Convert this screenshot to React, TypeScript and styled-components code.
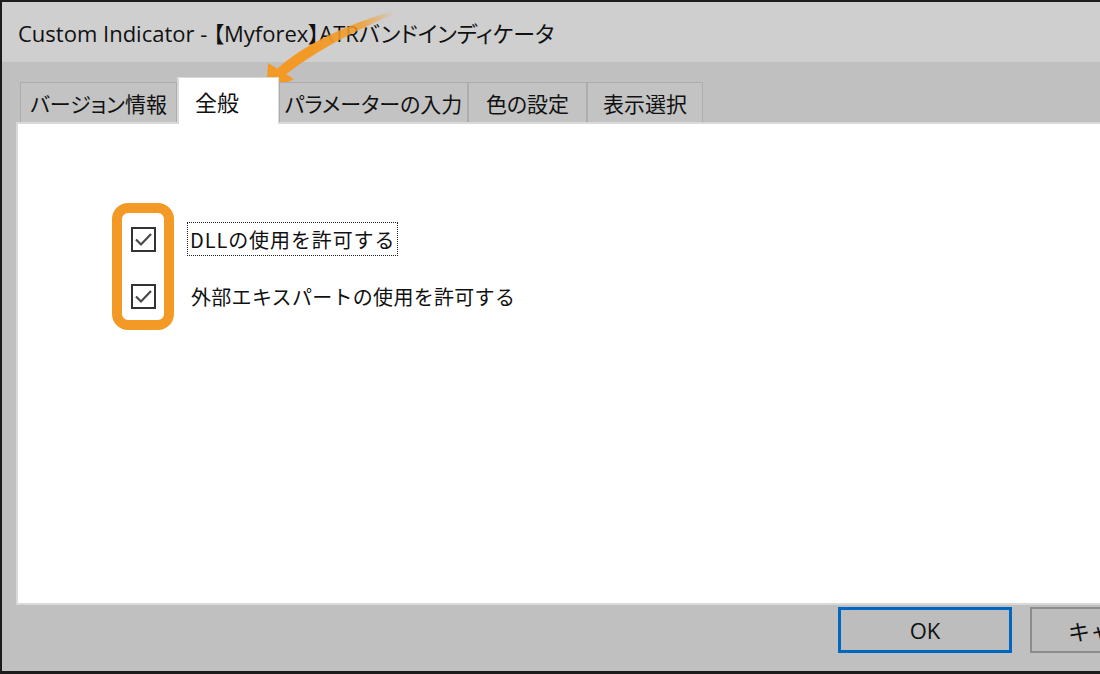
import React from 'react';
import styled, { createGlobalStyle } from 'styled-components';

const GlobalStyle = createGlobalStyle`
  html, body {
    margin: 0;
    padding: 0;
    background: #1c1c1c;
  }
  * {
    box-sizing: border-box;
  }
`;

const jpFont = `"Open Sans", "Noto Sans CJK JP", sans-serif`;

const Window = styled.div`
  position: relative;
  width: 1100px;
  height: 674px;
  overflow: hidden;
  display: flex;
  flex-direction: column;
  border-top: 2px solid #1c1c1c;
  border-left: 2px solid #1c1c1c;
  border-bottom: 3px solid #1c1c1c;
  font-family: ${jpFont};
  color: #111;
`;

const TitleBar = styled.div`
  height: 60px;
  flex: none;
  display: flex;
  align-items: center;
  padding-left: 16px;
  background: #cfcfcf;
  font-size: 22px;
  font-feature-settings: 'palt';
  white-space: nowrap;
`;

const Body = styled.div`
  flex: 1;
  display: flex;
  flex-direction: column;
  padding: 15px 0 18px 14px;
  background: #c0c0c0;
`;

const TabRow = styled.div`
  display: flex;
  align-items: flex-end;
  height: 47px;
  margin: 0 0 -2px 4px;
  position: relative;
  z-index: 1;
`;

const Tab = styled.div<{ $w: number; $active?: boolean }>`
  width: ${(p) => p.$w}px;
  height: ${(p) => (p.$active ? 47 : 40)}px;
  margin-bottom: ${(p) => (p.$active ? 0 : 2)}px;
  display: flex;
  align-items: center;
  justify-content: ${(p) => (p.$active ? 'flex-start' : 'center')};
  padding-left: ${(p) => (p.$active ? 16 : 0)}px;
  background: ${(p) => (p.$active ? '#ffffff' : '#c3c3c3')};
  border: 1px solid ${(p) => (p.$active ? '#dadada' : '#adadad')};
  border-bottom: none;
  border-left-width: ${(p) => (p.$active ? 2 : 1)}px;
  font-size: ${(p) => (p.$active ? 22 : 21)}px;
  font-feature-settings: 'palt';
  white-space: nowrap;
`;

const Panel = styled.div`
  position: relative;
  height: 483px;
  flex: none;
  background: #ffffff;
  border: 2px solid #d9d9d9;
  border-right: none;
  padding: 98px 0 0 113px;
  display: flex;
  flex-direction: column;
  gap: 23px;
`;

const OptionRow = styled.div`
  display: flex;
  align-items: center;
  height: 34px;
  gap: 31px;
`;

const Box = styled.span`
  width: 25px;
  height: 25px;
  flex: none;
  border: 2px solid #333333;
  display: flex;
  align-items: center;
  justify-content: center;
  background: #ffffff;
`;

const Label = styled.span<{ $focused?: boolean }>`
  height: 34px;
  display: flex;
  align-items: center;
  padding: 0 2px;
  margin-left: ${(p) => (p.$focused ? 0 : 1)}px;
  border: 1px dotted ${(p) => (p.$focused ? '#222' : 'transparent')};
  font-family: "Noto Sans CJK JP", sans-serif;
  font-size: 20px;
  letter-spacing: ${(p) => (p.$focused ? 0.9 : 0.3)}px;
  white-space: nowrap;
`;

const Highlight = styled.div`
  position: absolute;
  left: 94px;
  top: 79px;
  width: 62px;
  height: 127px;
  border: 10px solid #f39a26;
  border-radius: 16px;
  pointer-events: none;
`;

const Footer = styled.div`
  display: flex;
  gap: 18px;
  margin-top: 2px;
  padding-left: 822px;
`;

const Button = styled.div<{ $default?: boolean }>`
  width: 174px;
  height: 46px;
  flex: none;
  display: flex;
  align-items: center;
  justify-content: ${(p) => (p.$default ? 'center' : 'flex-start')};
  padding-left: ${(p) => (p.$default ? 0 : 36)}px;
  background: #bdbdbd;
  border: ${(p) => (p.$default ? '3px solid #0067c0' : '2px solid #8c8c8c')};
  font-size: 22px;
  white-space: nowrap;
`;

const ArrowLayer = styled.svg`
  position: absolute;
  left: 0;
  top: 0;
  pointer-events: none;
`;

const Check = () => (
  <svg width="21" height="21" viewBox="0 0 21 21">
    <polyline points="3,10.5 8,15.5 18,5" fill="none" stroke="#4a4a4a" strokeWidth="2.2" />
  </svg>
);

const options = [
  { label: 'DLLの使用を許可する', focused: true },
  { label: '外部エキスパートの使用を許可する', focused: false },
];

const tabs = [
  { name: 'バージョン情報', w: 157 },
  { name: '全般', w: 102, active: true },
  { name: 'パラメーターの入力', w: 189 },
  { name: '色の設定', w: 119 },
  { name: '表示選択', w: 116 },
];

export default function App() {
  return (
    <>
      <GlobalStyle />
      <Window>
        <TitleBar>Custom Indicator - 【Myforex】ATRバンドインディケータ</TitleBar>
        <Body>
          <TabRow>
            {tabs.map((t) => (
              <Tab key={t.name} $w={t.w} $active={t.active}>
                {t.name}
              </Tab>
            ))}
          </TabRow>
          <Panel>
            {options.map((o) => (
              <OptionRow key={o.label}>
                <Box>
                  <Check />
                </Box>
                <Label $focused={o.focused}>{o.label}</Label>
              </OptionRow>
            ))}
            <Highlight />
          </Panel>
          <Footer>
            <Button $default>OK</Button>
            <Button>キャンセル</Button>
          </Footer>
        </Body>
        {/* curved pointer down to the selected tab */}
        <ArrowLayer width="420" height="110" viewBox="0 0 420 110">
          <defs>
            <linearGradient id="arrowFade" gradientUnits="userSpaceOnUse" x1="392" y1="9" x2="310" y2="45">
              <stop offset="0" stopColor="#f39a26" stopOpacity="0" />
              <stop offset="0.4" stopColor="#f39a26" stopOpacity="0.8" />
              <stop offset="1" stopColor="#f39a26" stopOpacity="1" />
            </linearGradient>
          </defs>
          <path
            d="M390 9 Q312 33 274.6 67.2 L283.4 72.8 Q322 42 392 12 Z"
            fill="url(#arrowFade)"
          />
          <polygon points="266,61 292,77 264,91" fill="#f39a26" />
        </ArrowLayer>
      </Window>
    </>
  );
}
